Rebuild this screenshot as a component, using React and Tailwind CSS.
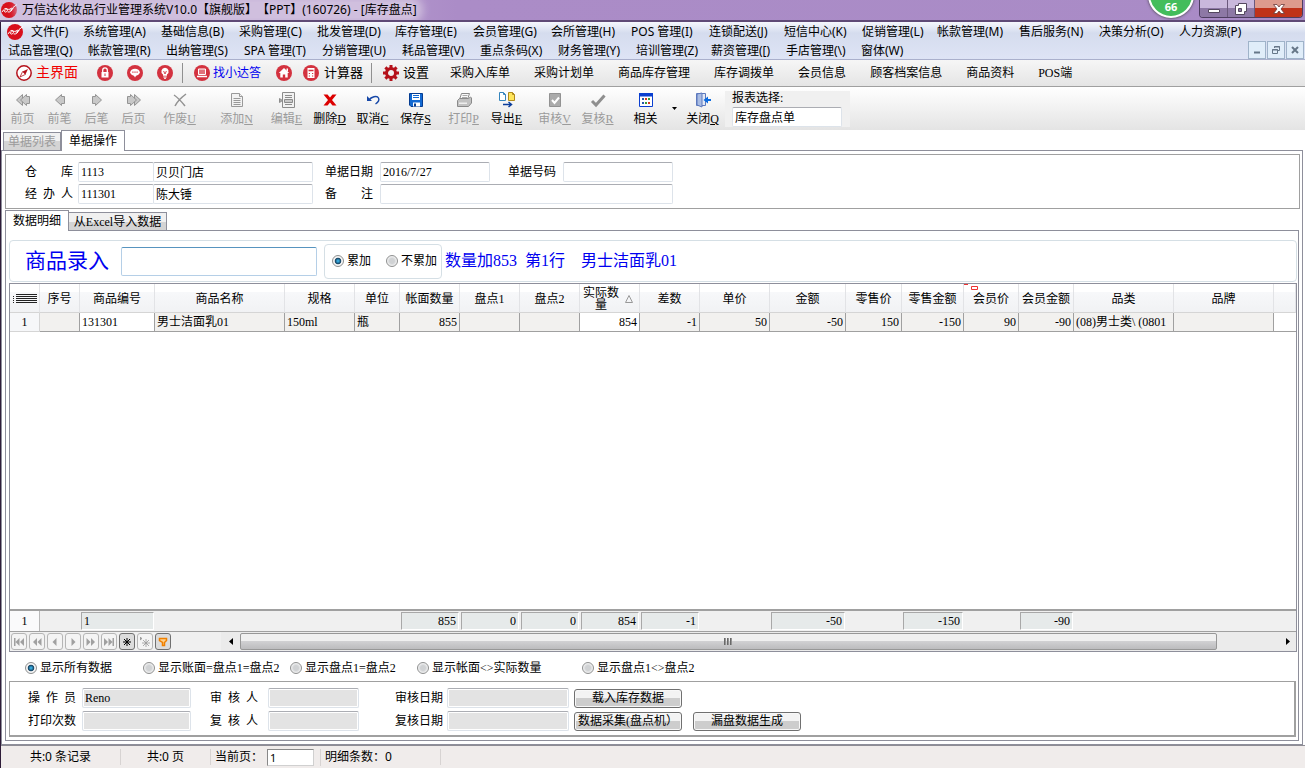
import React from 'react';

const menuRow1 = [
    { label: '文件(F)', width: 'w-[52px]' },
    { label: '系统管理(A)', width: 'w-[78px]' },
    { label: '基础信息(B)', width: 'w-[78px]' },
    { label: '采购管理(C)', width: 'w-[78px]' },
    { label: '批发管理(D)', width: 'w-[78px]' },
    { label: '库存管理(E)', width: 'w-[78px]' },
    { label: '会员管理(G)', width: 'w-[78px]' },
    { label: '会所管理(H)', width: 'w-[80px]' },
    { label: 'POS 管理(I)', width: 'w-[78px]' },
    { label: '连锁配送(J)', width: 'w-[75px]' },
    { label: '短信中心(K)', width: 'w-[78px]' },
    { label: '促销管理(L)', width: 'w-[75px]' },
    { label: '帐款管理(M)', width: 'w-[82px]' },
    { label: '售后服务(N)', width: 'w-[80px]' },
    { label: '决策分析(O)', width: 'w-[80px]' },
    { label: '人力资源(P)', width: 'w-[78px]' },
];

const menuRow2 = [
    { label: '试品管理(Q)', width: 'w-[80px]' },
    { label: '帐款管理(R)', width: 'w-[78px]' },
    { label: '出纳管理(S)', width: 'w-[78px]' },
    { label: 'SPA 管理(T)', width: 'w-[78px]' },
    { label: '分销管理(U)', width: 'w-[80px]' },
    { label: '耗品管理(V)', width: 'w-[78px]' },
    { label: '重点条码(X)', width: 'w-[78px]' },
    { label: '财务管理(Y)', width: 'w-[78px]' },
    { label: '培训管理(Z)', width: 'w-[75px]' },
    { label: '薪资管理([)', width: 'w-[75px]' },
    { label: '手店管理(\\)', width: 'w-[75px]' },
    { label: '窗体(W)', width: 'w-[52px]' },
];

const shortcuts = ['采购入库单', '采购计划单', '商品库存管理', '库存调拨单', '会员信息', '顾客档案信息', '商品资料', 'POS端'];

const columns = [
    { width: 'w-[30px]' },
    { title: '序号', width: 'w-[40px]', value: '' },
    { title: '商品编号', width: 'w-[75px]', value: '131301', white: true, total: '1', left: true },
    { title: '商品名称', width: 'w-[130px]', value: '男士洁面乳01', left: true },
    { title: '规格', width: 'w-[70px]', value: '150ml', left: true },
    { title: '单位', width: 'w-[45px]', value: '瓶', left: true },
    { title: '帐面数量', width: 'w-[60px]', value: '855', total: '855' },
    { title: '盘点1', width: 'w-[60px]', value: '', total: '0' },
    { title: '盘点2', width: 'w-[60px]', value: '', total: '0' },
    { title: '实际数量', width: 'w-[60px]', value: '854', white: true, sorted: true, total: '854' },
    { title: '差数', width: 'w-[60px]', value: '-1', total: '-1' },
    { title: '单价', width: 'w-[70px]', value: '50' },
    { title: '金额', width: 'w-[76px]', value: '-50', total: '-50' },
    { title: '零售价', width: 'w-[56px]', value: '150' },
    { title: '零售金额', width: 'w-[62px]', value: '-150', total: '-150' },
    { title: '会员价', width: 'w-[55px]', value: '90', marked: true },
    { title: '会员金额', width: 'w-[55px]', value: '-90', total: '-90' },
    { title: '品类', width: 'w-[100px]', value: '(08)男士类\\ (0801', left: true },
    { title: '品牌', width: 'w-[100px]', value: '' },
];

const Logo = () => (
    <svg viewBox="0 0 16 16" className="h-4 w-4 shrink-0">
        <circle cx="8" cy="8" r="8" fill="#d8101c" />
        <path d="M1.500 9.500C3 6 6 5.500 6.500 7.500S4 11 3.500 9.500 6 6.500 8 7.500l3-1.500M7 10c2 .5 4-1 4.500-3.500M9 8.500l3.500-2.500" fill="none" stroke="#fff" strokeWidth="1" strokeLinecap="round" />
        <path d="M12 5.500l4-3" stroke="#fff" strokeWidth="1" />
    </svg>
);

const CompassIcon = () => (
    <svg viewBox="0 0 16 16" className="h-4 w-4">
        <circle cx="8" cy="8" r="7.200" fill="#fff" stroke="#b5121b" strokeWidth="1.500" />
        <path d="M12 4L9.400 9.400 6.600 6.600z" fill="#b5121b" />
        <path d="M4 12l2.600-5.400 2.800 2.800z" fill="#fff" stroke="#b5121b" strokeWidth=".8" />
    </svg>
);

const GearIcon = () => (
    <svg viewBox="0 0 16 16" className="h-4 w-4">
        <path d="M8 0v16M0 8h16M2.400 2.400l11.200 11.200M13.600 2.400L2.400 13.600" stroke="#b5121b" strokeWidth="3" />
        <circle cx="8" cy="8" r="4.500" fill="#f1f1f1" stroke="#b5121b" strokeWidth="3" />
    </svg>
);

const roundShapes = {
    lock: (
        <g>
            <path d="M4.500 7h7v5.500h-7z" fill="#fff" />
            <path d="M5.700 7V5.200a2.300 2.300 0 0 1 4.600 0V7" fill="none" stroke="#fff" strokeWidth="1.300" />
            <path d="M8 8.500v2.500" stroke="#d3323f" />
        </g>
    ),
    message: (
        <g>
            <ellipse cx="8" cy="7.200" rx="4.800" ry="3.500" fill="#fff" />
            <path d="M6.500 10h3L8 12.500z" fill="#fff" />
            <path d="M5.300 7.200h1.200M7.400 7.200h1.200M9.500 7.200h1.200" stroke="#d3323f" strokeWidth="1.300" />
        </g>
    ),
    bulb: (
        <g>
            <path d="M8 2.800a3.600 3.600 0 0 1 2 6.600v1.400H6V9.400a3.600 3.600 0 0 1 2-6.600z" fill="#fff" />
            <path d="M6.600 6l1.400 3 1.400-3" fill="none" stroke="#d3323f" strokeWidth=".9" />
            <path d="M6.300 12h3.400M7 13.300h2" stroke="#fff" />
        </g>
    ),
    monitor: (
        <g fill="none" stroke="#fff">
            <path d="M4.500 4h7v5.500h-7z" fill="#e0737c" />
            <path d="M3 11.500h10" strokeWidth="1.500" />
        </g>
    ),
    house: (
        <g>
            <path d="M8 3L2.800 8h1.500v4.500h2.500V9.500h2.400v3h2.500V8h1.500z" fill="#fff" />
            <path d="M10.500 3.500h1.500v3h-1.500z" fill="#fff" />
        </g>
    ),
    calculator: (
        <g>
            <path d="M4.500 3h7v10h-7z" fill="#fff" />
            <path d="M5.500 5.500h5" stroke="#d3323f" strokeWidth="1.500" />
            <path d="M5.800 8.500h1.200M9 8.500h1.200M5.800 11h1.200M9 11h1.200" stroke="#d3323f" strokeWidth="1.200" />
        </g>
    ),
};

const RoundIcon = ({ shape, label }) => (
    <button aria-label={label} className="shrink-0">
        <svg viewBox="0 0 16 16" className="h-4 w-4">
            <circle cx="8" cy="8" r="8" fill="#d3323f" />
            {roundShapes[shape]}
        </svg>
    </button>
);

const toolIcons = {
    first: (
        <g fill="#c8c8c8" stroke="#949494">
            <path d="M7.500 2.500L1.500 8l6 5.500v-11z" />
            <path d="M14.500 4.500h-3v-2L5.500 8l6 5.500v-2h3z" />
        </g>
    ),
    prev: <path d="M12.500 4.500h-3v-2L3.500 8l6 5.500v-2h3z" fill="#c8c8c8" stroke="#949494" />,
    next: <path d="M3.500 4.500h3v-2l6 5.500-6 5.500v-2h-3z" fill="#c8c8c8" stroke="#949494" />,
    last: (
        <g fill="#c8c8c8" stroke="#949494">
            <path d="M8.500 2.500l6 5.500-6 5.500v-11z" />
            <path d="M1.500 4.500h3v-2l6 5.500-6 5.500v-2h-3z" />
        </g>
    ),
    void: <path d="M2 3c3 2 7 6 11 11M14 2C10 5 5 10 3 14" fill="none" stroke="#929292" strokeWidth="1.500" />,
    add: (
        <g fill="#f2f2f2" stroke="#999">
            <path d="M2.500 1.500h8l3 3v10h-11z" />
            <path d="M10.500 1.500v3h3M4.500 6.500h7M4.500 8.500h7M4.500 10.500h7M4.500 12.500h7" />
        </g>
    ),
    edit: (
        <g fill="#f2f2f2" stroke="#8c8c8c">
            <path d="M3.500 .5h12v15h-12zM6 3.500h7M6 5.500h7M6 12.500h7" />
            <path d="M5.500 7.500h8v3h-8z" fill="#c9c9c9" />
            <path d="M.5 6.500v4l3-2z" fill="#aaa" />
        </g>
    ),
    remove: <path d="M1.500 2.500h4L8 5.500l2.500-3h4L10 8l4.500 5.500h-4L8 10.500l-2.500 3h-4L6 8z" fill="#dc0000" />,
    undo: (
        <g fill="none" stroke="#1748a8" strokeWidth="1.400">
            <path d="M4 8c2-3 8-5 9.500-2S12 11 10.500 12" />
            <path d="M2 4v5h5z" fill="#1748a8" stroke="none" />
        </g>
    ),
    save: (
        <g>
            <path d="M1.500 1.500h13v13h-11.500l-1.500-1.500z" fill="#1269d2" stroke="#053c91" />
            <path d="M4 2h8v6H4z" fill="#fff" />
            <path d="M5 3.500h6M5 5.500h6" stroke="#1269d2" />
            <path d="M5 10.500h7v4H5z" fill="#fff" />
            <path d="M6 11.500h2v3H6z" fill="#053c91" />
        </g>
    ),
    print: (
        <g stroke="#8a8a8a" fill="#ddd">
            <path d="M5.500 1.500h8l-2 6h-8z" fill="#fafafa" />
            <path d="M6.500 3.500h5M6 5.500h5" stroke="#aaa" />
            <path d="M1.500 8.500l2-2h9l2-1.500 1 1v5l-3 3.500h-11z" fill="#c2c2c2" />
            <path d="M3 10.500h8v1.500H3z" fill="#eee" stroke="none" />
        </g>
    ),
    exported: (
        <g>
            <path d="M.5 .5h4l2 2v6h-6zM4.500 .5v2h2" fill="#fff" stroke="#3585bd" />
            <path d="M9.500 .5h4l2 2v6h-6zM13.500 .5v2h2" fill="#ffe65c" stroke="#b08a1c" />
            <path d="M4 12.500h8M9.500 10l3 2.500-3 2.500" fill="none" stroke="#0b3d9c" strokeWidth="1.500" />
        </g>
    ),
    audit: (
        <g>
            <path d="M2.500 1.500h11v13h-11z" fill="#ababab" stroke="#929292" />
            <path d="M5 8l2.500 3L12 5.500" fill="none" stroke="#fff" strokeWidth="2" />
        </g>
    ),
    check: <path d="M2 9l4 4 8.500-9.500" fill="none" stroke="#8f8f8f" strokeWidth="3" />,
    grid: (
        <g>
            <path d="M1.500 1.500h13v13h-13z" fill="#fff" stroke="#0a3fd0" />
            <path d="M1 1h14v3.500H1z" fill="#0a3fd0" />
            <path d="M4 6h2v2H4zM4 10h2v2H4z" fill="#2558a8" />
            <path d="M7 6h2v2H7zM10 10h2v2h-2z" fill="#d43b20" />
            <path d="M10 6h2v2h-2zM7 10h2v2H7z" fill="#3a9a35" />
        </g>
    ),
    close: (
        <g>
            <path d="M1.500 1.500h9v12h-9z" fill="#e3e9f5" stroke="#5c78bd" />
            <path d="M2 2l5-1v14l-5-2z" fill="#a9bce3" stroke="#5c78bd" />
            <path d="M16 7h-3V4.500L8.500 8l4.500 3.500V9h3z" fill="#0b6be0" />
        </g>
    ),
};

const tools = [
    { icon: 'first', label: '前页', space: 'w-[37px]', disabled: true },
    { icon: 'prev', label: '前笔', space: 'w-[37px]', disabled: true },
    { icon: 'next', label: '后笔', space: 'w-[37px]', disabled: true },
    { icon: 'last', label: '后页', space: 'w-[37px]', disabled: true },
    { icon: 'void', label: '作废', hotkey: 'U', space: 'w-[43px] ml-1.5', disabled: true },
    { icon: 'add', label: '添加', hotkey: 'N', space: 'w-[43px] ml-3.5', disabled: true },
    { icon: 'edit', label: '编辑', hotkey: 'E', space: 'w-[43px] ml-[7px]', disabled: true },
    { icon: 'remove', label: '删除', hotkey: 'D', space: 'w-[43px]' },
    { icon: 'undo', label: '取消', hotkey: 'C', space: 'w-[43px]' },
    { icon: 'save', label: '保存', hotkey: 'S', space: 'w-[43px]' },
    { icon: 'print', label: '打印', hotkey: 'P', space: 'w-[43px] ml-[5px]', disabled: true },
    { icon: 'exported', label: '导出', hotkey: 'E', space: 'w-[43px]' },
    { icon: 'audit', label: '审核', hotkey: 'V', space: 'w-[43px] ml-[5px]', disabled: true },
    { icon: 'check', label: '复核', hotkey: 'R', space: 'w-[43px]', disabled: true },
    { icon: 'grid', label: '相关', space: 'w-[43px] ml-[5px]' },
];

const ToolButton = ({ icon, label, hotkey, space, disabled }) => (
    <button
        disabled={disabled}
        className={`${space} flex h-full shrink-0 flex-col items-center pt-[5px] leading-4 ${disabled ? 'text-[#9b9b9b]' : 'text-black'}`}
    >
        <svg viewBox="0 0 16 16" className="mb-[3px] h-4 w-4">{toolIcons[icon]}</svg>
        <span className="whitespace-nowrap">{label}{hotkey && <u>{hotkey}</u>}</span>
    </button>
);

const Radio = ({ name, label, width, defaultChecked }) => (
    <label className={`${width} flex shrink-0 items-center gap-[3px] whitespace-nowrap`}>
        <input
            type="radio"
            name={name}
            defaultChecked={defaultChecked}
            className="h-3 w-3 shrink-0 appearance-none rounded-full border border-[#8e8f8f] bg-[radial-gradient(circle,#d0d2d4_35%,#f8f8f8_75%)] checked:bg-[radial-gradient(circle,#35a5d8_12%,#14405f_40%,#f4f4f4_52%)]"
        />
        {label}
    </label>
);

const Label = ({ htmlFor, children }) => (
    <label htmlFor={htmlFor} className="w-12 shrink-0 [text-align-last:justify]">{children}</label>
);

const fieldStyle = 'h-5 min-w-0 rounded-[2px] border border-[#dde3ea] border-t-[#abadb3] bg-white px-0.5';
const greyField = 'h-5 rounded-[2px] border border-[#dde3ea] border-t-[#abadb3] bg-[#e3e3e3] px-0.5 shadow-[inset_0_0_0_1px_#fff]';
const pushButton = 'h-[19px] w-[108px] shrink-0 whitespace-nowrap rounded-[3px] border border-[#707070] bg-linear-to-b from-[#f3f3f3] from-50% to-[#cdcdcd] to-50% shadow-[inset_0_0_0_1px_#f8f8f8]';

const TitleBar = () => (
    <header className="relative flex h-[22px] items-center overflow-hidden border-b-2 border-[#5f4a76] bg-linear-to-r from-[#d3c4df] via-[#ab8cc7] via-35% to-[#a98bc6] [font-family:'Noto_Sans','Noto_Sans_CJK_SC',sans-serif]">
        <span className="ml-px"><Logo /></span>
        <h1 className="ml-[5px] whitespace-nowrap rounded-full bg-[#d0bfde] shadow-[0_0_8px_6px_#d0bfde]">万信达化妆品行业管理系统V10.0【旗舰版】【PPT】(160726) - [库存盘点]</h1>
        <div className="absolute -top-7 right-[111px] flex h-[46px] w-[46px] items-end justify-center rounded-full border-2 border-white bg-[#43bd5b] pb-[3px] text-[11px] font-bold leading-3 text-white shadow-[0_0_3px_#333]">66</div>
        <div className="ml-auto mr-0.5 flex h-[18px] shrink-0 self-start overflow-hidden rounded-b border border-t-0 border-[#4d3d60]">
            <button aria-label="最小化" className="flex w-7 items-center justify-center border-r border-[#6a587c] bg-linear-to-b from-[#c9b8dc] from-50% to-[#8d78a5] to-50%">
                <svg viewBox="0 0 12 10" className="h-[10px] w-3"><path d="M.5 5.500h11v3H.5z" fill="#fff" stroke="#54485f" /></svg>
            </button>
            <button aria-label="还原" className="flex w-[27px] items-center justify-center border-r border-[#6a587c] bg-linear-to-b from-[#c9b8dc] from-50% to-[#8d78a5] to-50%">
                <svg viewBox="0 0 12 12" className="h-3 w-3"><path d="M3.500 .5h8v8h-2v3h-9v-9h3zM3.500 5.500v3h3v-3z" fill="#fff" fillRule="evenodd" stroke="#54485f" /></svg>
            </button>
            <button aria-label="关闭" className="flex w-[47px] items-center justify-center bg-linear-to-b from-[#dd9b8d] from-50% to-[#bf3219] to-50%">
                <svg viewBox="0 0 12 10" className="h-[10px] w-3"><path d="M.5 .5h3.500L6 3 8 .5h3.500L8 5l3.500 4.500H8L6 7 4 9.500H.5L4 5z" fill="#fff" stroke="#6a3a38" strokeWidth=".8" /></svg>
            </button>
        </div>
    </header>
);

const MdiButton = ({ label, children }) => (
    <button aria-label={label} className="flex h-[18px] w-[18px] items-center justify-center border border-[#9fb3c9] bg-[#e0edf9]">
        <svg viewBox="0 0 10 10" className="h-[10px] w-[10px]" fill="none" stroke="#667788">{children}</svg>
    </button>
);

const MenuBar = () => (
    <nav className="h-[38px] border-b border-[#aab0cc] bg-linear-to-b from-[#f5f8fd] via-[#d5dcee] via-30% to-[#dee4f5] leading-[19px] [font-family:'Noto_Sans','Noto_Sans_CJK_SC',sans-serif]">
        <div className="flex h-[19px] items-center pl-[6px]">
            <Logo />
            <div className="ml-[8px] flex">
                {menuRow1.map((item) => (
                    <button key={item.label} className={`${item.width} shrink-0 whitespace-nowrap text-left`}>{item.label}</button>
                ))}
            </div>
        </div>
        <div className="flex h-[18px] pl-[7px]">
            {menuRow2.map((item) => (
                <button key={item.label} className={`${item.width} shrink-0 whitespace-nowrap text-left`}>{item.label}</button>
            ))}
            <div className="ml-auto mr-px flex gap-px">
                <MdiButton label="最小化窗口"><path d="M2 7.500h6" strokeWidth="2" /></MdiButton>
                <MdiButton label="还原窗口"><path d="M3.500 3V1.500h5v4H7M1.500 4.500h5v4h-5zM3 2h6M1 5h6" /></MdiButton>
                <MdiButton label="关闭窗口"><path d="M2 2l6 6M8 2L2 8" strokeWidth="2" /></MdiButton>
            </div>
        </div>
    </nav>
);

const ShortcutBar = () => (
    <div className="flex h-[27px] items-center whitespace-nowrap border-b border-[#a0a0a0] bg-linear-to-b from-[#f6f6f6] to-[#e5e5e5] pl-[15px]">
        <button className="flex items-center gap-1 text-[14px] text-[#f00000]"><CompassIcon />主界面</button>
        <div className="ml-[19px] flex gap-3.5">
            <RoundIcon shape="lock" label="锁定" />
            <RoundIcon shape="message" label="消息" />
            <RoundIcon shape="bulb" label="提示" />
        </div>
        <div className="mx-[9px] h-5 w-px bg-[#909090]"></div>
        <div className="ml-0.5 flex items-center gap-[3px] text-[#0000f0]">
            <RoundIcon shape="monitor" label="找小达答" />
            <button>找小达答</button>
        </div>
        <div className="ml-[15px] flex items-center gap-[11px]">
            <RoundIcon shape="house" label="主页" />
            <RoundIcon shape="calculator" label="计算器" />
        </div>
        <button className="ml-[5px] text-[13px]">计算器</button>
        <div className="ml-2 h-5 w-px bg-[#909090]"></div>
        <button className="ml-[11px] flex items-center gap-1 text-[13px]">
            <GearIcon />
            设置
        </button>
        <div className="ml-[9px] flex">
            {shortcuts.map((name) => (
                <button key={name} className="px-3">{name}</button>
            ))}
        </div>
    </div>
);

const ToolBar = () => (
    <div className="flex h-[43px] items-center bg-linear-to-b from-white to-[#e4e4e4] pl-[3px]">
        {tools.map((tool) => (
            <ToolButton key={tool.icon} {...tool} />
        ))}
        <button aria-label="更多相关" className="flex w-3.5 justify-center">
            <svg viewBox="0 0 5 3" className="h-[3px] w-[5px]"><path d="M0 0h5L2.500 3z" /></svg>
        </button>
        <ToolButton icon="close" label="关闭" hotkey="Q" space="w-[43px]" />
        <div className="ml-px flex h-9 w-[125px] flex-col bg-[#f0f0f0] pl-[7px]">
            <label htmlFor="report" className="h-4 leading-[14px]">报表选择:</label>
            <input id="report" defaultValue="库存盘点单" className={`${fieldStyle} w-[110px] shrink-0`} />
        </div>
    </div>
);

const DocumentForm = () => (
    <section className="flex h-[55px] shrink-0 flex-col gap-[2px] border border-[#a0a0a0] pl-[19px] pt-[7px]">
        <div className="flex items-center">
            <Label htmlFor="warehouse">仓库</Label>
            <input id="warehouse" defaultValue="1113" className={`${fieldStyle} ml-[5px] w-[76px]`} />
            <input aria-label="仓库名称" defaultValue="贝贝门店" className={`${fieldStyle} -ml-px w-[160px]`} />
            <span className="ml-3 flex"><Label htmlFor="date">单据日期</Label></span>
            <input id="date" defaultValue="2016/7/27" className={`${fieldStyle} ml-[7px] w-[110px]`} />
            <span className="ml-[18px] flex"><Label htmlFor="number">单据号码</Label></span>
            <input id="number" className={`${fieldStyle} ml-[7px] w-[110px]`} />
        </div>
        <div className="flex items-center">
            <Label htmlFor="handler">经办人</Label>
            <input id="handler" defaultValue="111301" className={`${fieldStyle} ml-[5px] w-[76px]`} />
            <input aria-label="经办人姓名" defaultValue="陈大锤" className={`${fieldStyle} -ml-px w-[160px]`} />
            <span className="ml-3 flex"><Label htmlFor="note">备注</Label></span>
            <input id="note" className={`${fieldStyle} ml-[7px] w-[293px]`} />
        </div>
    </section>
);

const EntryBox = () => (
    <section className="flex h-[42px] shrink-0 items-center rounded border border-[#d5dfe5] pl-[15px]">
        <label htmlFor="product" className="w-24 text-[21px] leading-6 text-[#0000f0]">商品录入</label>
        <input id="product" className="h-[29px] w-[196px] rounded-[2px] border border-[#b5cfe7] border-t-[#5794bf] px-1 text-base" />
        <div className="ml-[7px] flex h-[35px] w-[118px] items-center rounded border border-[#d5dfe5] pl-[7px]">
            <Radio name="mode" label="累加" width="w-[54px]" defaultChecked />
            <Radio name="mode" label="不累加" width="w-[54px]" />
        </div>
        <p className="ml-[3px] flex gap-2 whitespace-nowrap text-base leading-5 text-[#0000f0]">
            <span>数量加853</span>
            <span>第1行</span>
            <span className="ml-2">男士洁面乳01</span>
        </p>
    </section>
);

const Columns = () => (
    <colgroup>
        {columns.map((col, index) => (
            <col key={index} className={col.width} />
        ))}
        <col />
    </colgroup>
);

const headCell = 'relative h-[29px] border-b border-r border-[#d5d5d5] border-r-[#e2e3e6] bg-linear-to-b from-white from-30% via-[#f7f8fa] via-30% to-[#f1f2f4] p-0 pt-0.5 font-normal';

const StockTable = () => (
    <table className="w-full table-fixed border-separate border-spacing-0 whitespace-nowrap">
        <Columns />
        <thead>
            <tr>
                <th className={headCell}>
                    <svg viewBox="0 0 24 10" className="ml-[3px] h-[10px] w-6" stroke="#222">
                        <path d="M3 .5h21M0 2.500h1M3 2.500h21M0 4.500h1M3 4.500h21M0 6.500h1M3 6.500h21M0 8.500h1M3 8.500h21" />
                    </svg>
                </th>
                {columns.slice(1).map((col) => (
                    <th key={col.title} className={headCell}>
                        {col.sorted ? (
                            <span className="flex items-center justify-between pl-[3px] pr-1.5">
                                <span className="w-9 whitespace-normal leading-3">{col.title}</span>
                                <svg viewBox="0 0 8 8" className="h-2 w-2"><path d="M4 .5L7.500 7.500h-7z" fill="none" stroke="#999" /></svg>
                            </span>
                        ) : col.title}
                        {col.marked && (
                            <svg viewBox="0 0 14 6" className="absolute left-0 top-0 h-1.5 w-3.5" fill="none" stroke="#e33">
                                <path d="M0 .5h4M7.500 2.500h6v3h-6z" />
                            </svg>
                        )}
                    </th>
                ))}
                <th className={headCell}></th>
            </tr>
        </thead>
        <tbody>
            <tr>
                <td className="h-[19px] border-b border-r border-[#d5d5d5] bg-[#f6f7f9] p-0 text-center">1</td>
                {columns.slice(1).map((col) => (
                    <td
                        key={col.title}
                        className={`h-[19px] overflow-hidden border-b border-r border-[#a0a0a0] p-0 ${col.white ? 'bg-white' : 'bg-[#f2f1ef]'} ${col.left ? 'pl-0.5 text-left' : 'pr-0.5 text-right'}`}
                    >
                        {col.value}
                    </td>
                ))}
                <td className="border-b border-[#a0a0a0] p-0"></td>
            </tr>
        </tbody>
    </table>
);

const TotalsTable = () => (
    <table className="w-full table-fixed border-separate border-spacing-0 border-b border-t-2 border-[#a0a0a0] bg-[#f0f0f0]">
        <Columns />
        <tbody>
            <tr>
                <td className="h-5 border-r border-[#b8b8b8] bg-[#fafafb] p-0 text-center">1</td>
                {columns.slice(1).map((col) => (
                    <td key={col.title} className="h-5 p-px">
                        {col.total && (
                            <div className={`h-[18px] border border-white border-l-[#a8a8a8] border-t-[#a8a8a8] bg-[#e6eaea] px-0.5 leading-4 ${col.left ? 'text-left' : 'text-right'}`}>
                                {col.total}
                            </div>
                        )}
                    </td>
                ))}
                <td></td>
            </tr>
        </tbody>
    </table>
);

const navButtons = [
    { label: '首条', shape: <path d="M0 1h1.500v8H0zM5.500 1v8l-4-4zM10 1v8L6 5z" />, off: true },
    { label: '上一页', shape: <path d="M5 1v8L1 5zM9.500 1v8l-4-4z" />, off: true },
    { label: '上一条', shape: <path d="M6.500 1v8l-4-4z" />, off: true },
    { label: '下一条', shape: <path d="M3.500 1v8l4-4z" />, off: true },
    { label: '下一页', shape: <path d="M.5 1v8l4-4zM5 1v8l4-4z" />, off: true },
    { label: '末条', shape: <path d="M8.500 1H10v8H8.500zM0 1v8l4-4zM4.500 1v8l4-4z" />, off: true },
    { label: '书签', shape: <path d="M5 1v8M1 5h8M2 2l6 6M8 2L2 8" stroke="#000" /> },
    { label: '转到书签', shape: <path d="M0 0v3l2-1.500zM6 2v8M2 6h8M3 3l6 6M9 3L3 9" stroke="#999" strokeWidth=".8" />, off: true },
    { label: '筛选', shape: <path d="M1.500 1.500h7v2L6.500 5.500v3h-2v-3l-3-2z" fill="#ffd08a" stroke="#f08000" strokeWidth="1.500" /> },
];

const NavigatorBar = () => (
    <div className="flex h-[19px] items-center bg-[#f0f0f0]">
        <div className="flex gap-0.5 pl-px">
            {navButtons.map((button) => (
                <button
                    key={button.label}
                    aria-label={button.label}
                    className={`flex h-[17px] w-4 items-center justify-center rounded-[3px] border ${button.off ? 'border-[#b5b5b5] bg-[#f4f4f4]' : 'border-[#707070] bg-[#dcdcdc]'}`}
                >
                    <svg viewBox="0 0 10 10" className="h-[10px] w-[10px] shrink-0" fill="#a0a0a0">{button.shape}</svg>
                </button>
            ))}
        </div>
        <div className="ml-[50px] flex h-full flex-1 items-center bg-[#ebebeb]">
            <button aria-label="向左滚动" className="flex w-[19px] justify-center">
                <svg viewBox="0 0 4 7" className="h-[7px] w-1"><path d="M4 0v7L0 3.500z" /></svg>
            </button>
            <div className="flex h-full flex-1 items-center">
                <div className="flex h-[17px] w-[94%] items-center justify-center gap-px rounded-[2px] border border-[#979797] bg-linear-to-b from-[#f0f0f0] from-45% via-[#d2d2d4] via-45% to-[#bcbcbe]">
                    <span className="h-[7px] w-0.5 bg-linear-to-r from-[#555] to-[#aaa]"></span>
                    <span className="h-[7px] w-0.5 bg-linear-to-r from-[#555] to-[#aaa]"></span>
                    <span className="h-[7px] w-0.5 bg-linear-to-r from-[#555] to-[#aaa]"></span>
                </div>
            </div>
            <button aria-label="向右滚动" className="flex w-[17px] justify-center">
                <svg viewBox="0 0 4 7" className="h-[7px] w-1"><path d="M0 0v7l4-3.500z" /></svg>
            </button>
        </div>
    </div>
);

const FilterRow = () => (
    <div className="flex h-[29px] shrink-0 items-center pl-4 pt-0.5">
        <Radio name="filter" label="显示所有数据" width="w-[118px]" defaultChecked />
        <Radio name="filter" label="显示账面=盘点1=盘点2" width="w-[147px]" />
        <Radio name="filter" label="显示盘点1=盘点2" width="w-[127px]" />
        <Radio name="filter" label="显示帐面<>实际数量" width="w-[165px]" />
        <Radio name="filter" label="显示盘点1<>盘点2" width="w-[127px]" />
    </div>
);

const AuditPanel = () => (
    <section className="mr-px flex h-14 shrink-0 flex-col gap-[3px] border border-b-2 border-r-2 border-[#a0a0a0] pl-[18px] pt-1.5">
        <div className="flex items-center">
            <Label htmlFor="operator">操作员</Label>
            <input id="operator" readOnly defaultValue="Reno" className={`${greyField} ml-1.5 w-[109px]`} />
            <span className="ml-[19px] flex"><Label htmlFor="auditor">审核人</Label></span>
            <input id="auditor" readOnly className={`${greyField} ml-2.5 w-[91px]`} />
            <span className="ml-9 flex"><Label htmlFor="auditDate">审核日期</Label></span>
            <input id="auditDate" readOnly className={`${greyField} ml-1 w-[122px]`} />
            <button className={`${pushButton} ml-[5px]`}>载入库存数据</button>
        </div>
        <div className="flex items-center">
            <Label htmlFor="prints">打印次数</Label>
            <input id="prints" readOnly className={`${greyField} ml-1.5 w-[109px]`} />
            <span className="ml-[19px] flex"><Label htmlFor="reviewer">复核人</Label></span>
            <input id="reviewer" readOnly className={`${greyField} ml-2.5 w-[91px]`} />
            <span className="ml-9 flex"><Label htmlFor="reviewDate">复核日期</Label></span>
            <input id="reviewDate" readOnly className={`${greyField} ml-1 w-[122px]`} />
            <button className={`${pushButton} ml-[5px]`}>数据采集(盘点机）</button>
            <button className={`${pushButton} ml-[11px]`}>漏盘数据生成</button>
        </div>
    </section>
);

const StatusBar = () => (
    <footer className="flex h-[23px] shrink-0 items-center whitespace-nowrap border-t border-[#8e8c94] bg-[#f0eceb] [font-family:'Noto_Sans','Noto_Sans_CJK_SC',sans-serif]">
        <span className="w-[120px] border-r border-[#d7d3d2] text-center">共:0 条记录</span>
        <span className="w-[90px] border-r border-[#d7d3d2] text-center">共:0 页</span>
        <div className="flex w-[110px] items-center border-r border-[#d7d3d2] pl-1">
            <label htmlFor="page" className="w-[52px]">当前页：</label>
            <input id="page" defaultValue="1" className="h-[17px] w-[47px] border border-[#d0d0d0] border-l-[#888] border-t-[#888] bg-white px-0.5 text-[11px]" />
        </div>
        <span className="w-[120px] border-r border-[#d7d3d2] pl-1">明细条数：0</span>
    </footer>
);

const App = () => {
    return (
        <div className="flex h-screen min-h-[480px] flex-col overflow-hidden bg-white text-xs text-black [font-family:'Liberation_Serif','Noto_Sans_CJK_SC',serif] [text-spacing-trim:space-all]">
            <TitleBar />
            <div className="flex min-h-0 flex-1 flex-col border-l border-[#2e1c38]">
                <MenuBar />
                <ShortcutBar />
                <ToolBar />
                <div className="flex h-5 shrink-0 items-end pl-0.5">
                    <button className="h-[18px] w-[58px] border border-b-0 border-[#8e8f9b] bg-linear-to-b from-[#f0f0f0] from-50% to-[#d4d4d4] to-50% text-[#9b9b9b]">单据列表</button>
                    <button className="relative -mb-px h-[21px] w-16 border border-b-0 border-[#8e8f9b] bg-white">单据操作</button>
                </div>
                <main className="mr-0.5 flex min-h-0 flex-1 flex-col border border-[#8e8f9b] p-[3px] pr-0.5">
                    <DocumentForm />
                    <div className="flex h-[21px] shrink-0 items-end">
                        <button className="relative -mb-px h-[21px] w-16 border border-b-0 border-[#8e8f9b] bg-white">数据明细</button>
                        <button className="h-[18px] w-[98px] whitespace-nowrap border border-b-0 border-l-0 border-[#8e8f9b] bg-linear-to-b from-[#f0f0f0] from-50% to-[#d4d4d4] to-50%">从Excel导入数据</button>
                    </div>
                    <div className="mr-px flex min-h-0 flex-1 flex-col border border-[#8e8f9b] p-[3px] pr-px pt-[9px]">
                        <EntryBox />
                        <section className="mt-px flex min-h-0 flex-1 flex-col border border-[#8e8f9b]">
                            <div className="min-h-0 flex-1 overflow-hidden"><StockTable /></div>
                            <TotalsTable />
                            <NavigatorBar />
                        </section>
                        <FilterRow />
                        <AuditPanel />
                    </div>
                </main>
                <StatusBar />
            </div>
        </div>
    );
};

export default App;
